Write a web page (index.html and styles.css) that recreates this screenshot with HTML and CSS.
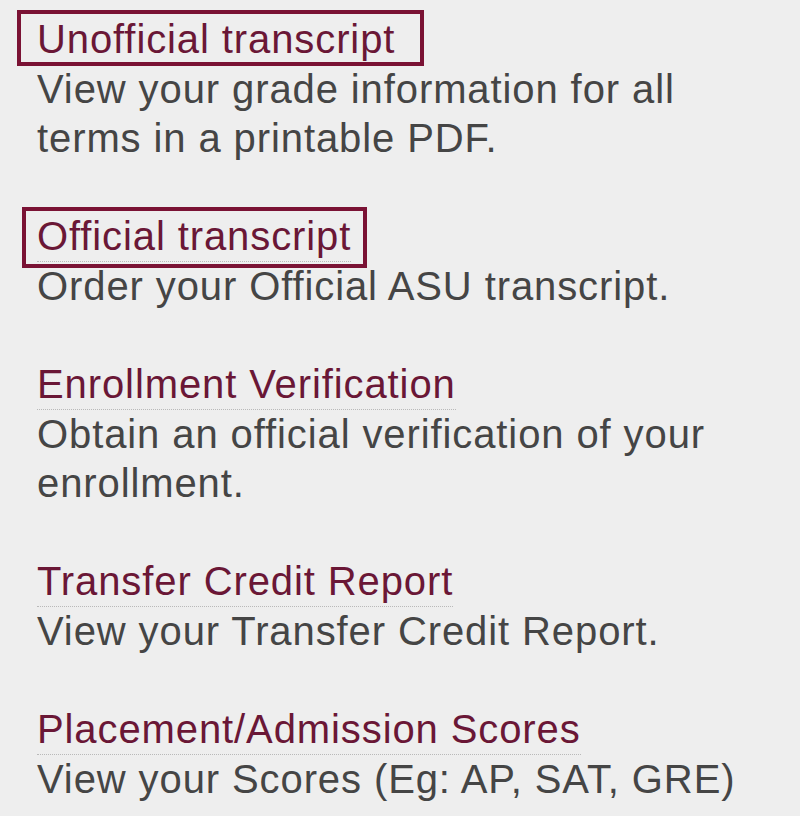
FILE: index.html
```html
<!DOCTYPE html>
<html lang="en">
<head>
<meta charset="utf-8">
<title>Transcripts</title>
<link rel="stylesheet" href="styles.css">
</head>
<body>
<div class="list">
  <div class="item">
    <a class="title boxed box-a" href="#">Unofficial transcript</a>
    <div class="desc">View your grade information for all terms in a printable PDF.</div>
  </div>
  <div class="item">
    <a class="title boxed box-b" href="#">Official transcript</a>
    <div class="desc">Order your Official ASU transcript.</div>
  </div>
  <div class="item">
    <a class="title" href="#">Enrollment Verification</a>
    <div class="desc">Obtain an official verification of your enrollment.</div>
  </div>
  <div class="item">
    <a class="title" href="#">Transfer Credit Report</a>
    <div class="desc">View your Transfer Credit Report.</div>
  </div>
  <div class="item">
    <a class="title" href="#">Placement/Admission Scores</a>
    <div class="desc">View your Scores (Eg: AP, SAT, GRE)</div>
  </div>
</div>
</body>
</html>
```

FILE: styles.css
```css
html, body {
  margin: 0;
  padding: 0;
  background: #eeeeee;
}
body {
  font-family: "Liberation Sans", Arial, sans-serif;
  font-size: 40px;
  letter-spacing: 0.9px;
  line-height: 49px;
}
.list {
  width: 740px;
  padding: 15px 0 0 37px;
  display: flex;
  flex-direction: column;
  gap: 49px;
}
.item {
  display: flex;
  flex-direction: column;
  align-items: flex-start;
}
.title {
  display: inline-block;
  color: #6a1736;
  text-decoration: none;
  border-bottom: 1px dotted #b9b9b9;
  position: relative;
}
.desc {
  color: #454545;
}
.boxed::before {
  content: "";
  position: absolute;
  box-sizing: border-box;
  border: 4px solid #7a1234;
}
.box-a::before {
  left: -20px;
  top: -5px;
  width: 407px;
  height: 56px;
}
.box-b::before {
  left: -15px;
  top: -5px;
  width: 345px;
  height: 61px;
}
```
